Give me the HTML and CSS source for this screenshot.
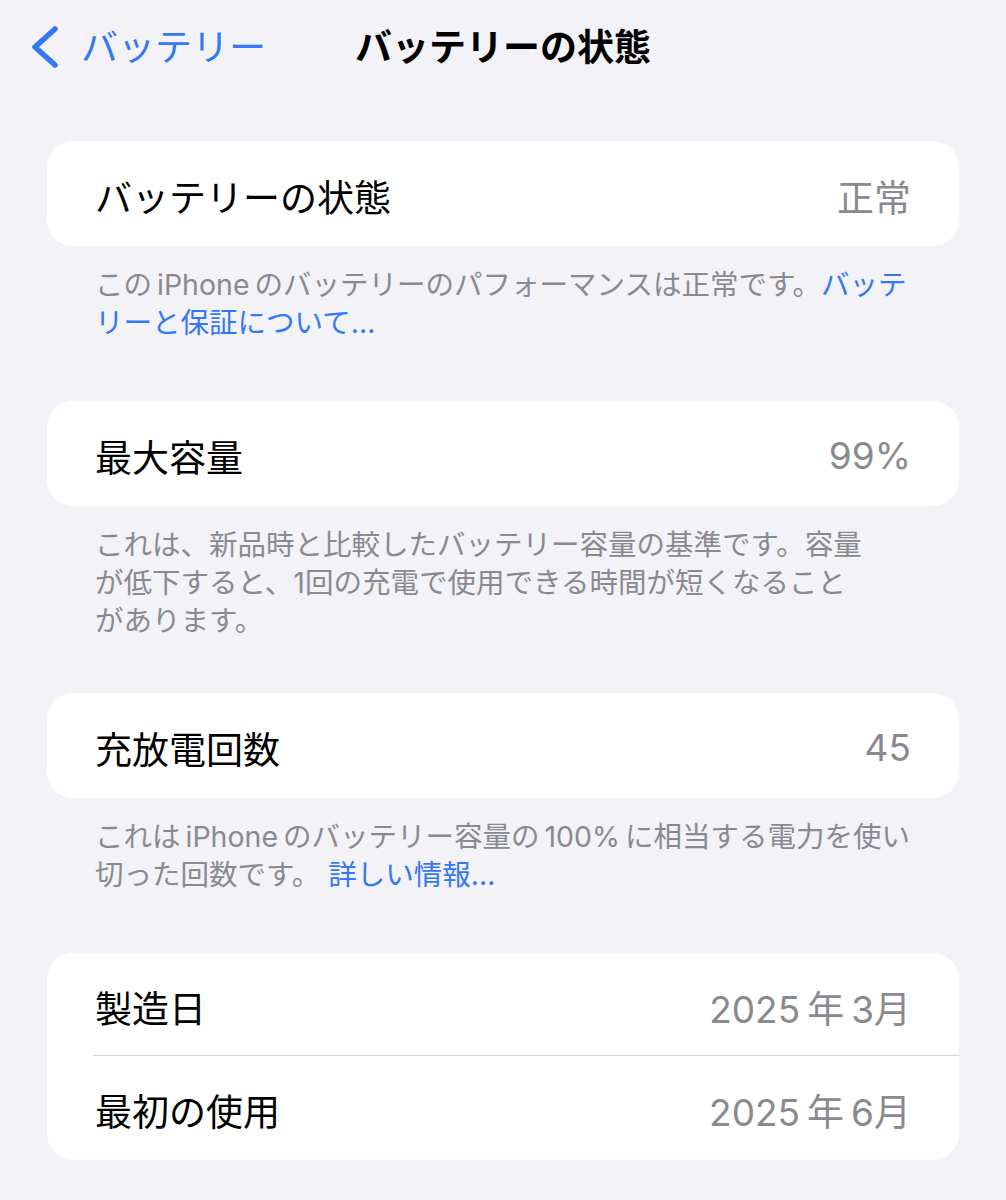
FILE: index.html
```html
<!DOCTYPE html>
<html lang="ja">
<head>
  <meta charset="utf-8" />
  <meta name="viewport" content="width=device-width, initial-scale=1.0">
  <title>バッテリーの状態</title>
  <link rel="stylesheet" href="styles.css">
</head>
<body>
  <!-- ナビゲーションバー -->
  <header class="nav">
    <a class="nav__back" href="#">
      <svg class="nav__chevron" viewBox="0 0 30 42" width="30" height="42" aria-hidden="true">
        <path d="M25 3 L5 21 L25 39" fill="none" stroke="currentColor" stroke-width="5.5" stroke-linecap="round" stroke-linejoin="round"/>
      </svg>
      <span>バッテリー</span>
    </a>
    <h1 class="nav__title">バッテリーの状態</h1>
  </header>

  <main class="list">
    <!-- バッテリーの状態 -->
    <section class="group">
      <div class="card">
        <div class="row">
          <span class="row__label">バッテリーの状態</span>
          <span class="row__value">正常</span>
        </div>
      </div>
      <p class="note">この<span class="en">iPhone</span>のバッテリーのパフォーマンスは正常です。<a href="#">バッテ<br>リーと保証について…</a></p>
    </section>

    <!-- 最大容量 -->
    <section class="group group--tight">
      <div class="card">
        <div class="row">
          <span class="row__label">最大容量</span>
          <span class="row__value">99%</span>
        </div>
      </div>
      <p class="note">これは、新品時と比較したバッテリー容量の基準です。容量<br>が低下すると、1回の充電で使用できる時間が短くなること<br>があります。</p>
    </section>

    <!-- 充放電回数 -->
    <section class="group">
      <div class="card">
        <div class="row">
          <span class="row__label">充放電回数</span>
          <span class="row__value">45</span>
        </div>
      </div>
      <p class="note">これは<span class="en">iPhone</span>のバッテリー容量の<span class="en">100%</span>に相当する電力を使い<br>切った回数です。 <a href="#">詳しい情報…</a></p>
    </section>

    <!-- 日付 -->
    <section class="group">
      <div class="card">
        <div class="row row--top">
          <span class="row__label">製造日</span>
          <span class="row__value">2025<span class="sp">年</span>3月</span>
        </div>
        <div class="divider"></div>
        <div class="row row--bottom">
          <span class="row__label">最初の使用</span>
          <span class="row__value">2025<span class="sp">年</span>6月</span>
        </div>
      </div>
    </section>
  </main>
</body>
</html>
```

FILE: styles.css
```css
/* ===== 基本 ===== */
*, *::before, *::after {
  margin: 0;
  padding: 0;
  box-sizing: border-box;
}

:root {
  --bg: #f2f2f7;
  --blue: #3478f6;
  --gray: #8a8a8e;
  --line: #d6d6da;
}

body {
  background: var(--bg);
  font-family: Inter, "Noto Sans CJK JP", sans-serif;
  color: #000;
  width: 1006px;
  min-height: 1200px;
}

a {
  color: var(--blue);
  text-decoration: none;
}

/* ===== ナビゲーション ===== */
.nav {
  display: grid;
  grid-template-columns: 1fr auto 1fr;
  align-items: center;
  height: 94px;
  padding: 0 30px;
}
.nav__back {
  display: flex;
  align-items: center;
  gap: 21px;
  font-size: 37px;
  line-height: 1;
}
.nav__chevron {
  display: block;
}
.nav__title {
  grid-column: 2;
  font-size: 37px;
  font-weight: 700;
  line-height: 1;
}

/* ===== リスト ===== */
.list {
  padding: 47px 47px 0;
}
.group {
  margin-bottom: 59px;
}
.group--tight {
  margin-bottom: 53px;
}
.card {
  background: #fff;
  border-radius: 26px;
  overflow: hidden;
}
.row {
  display: flex;
  justify-content: space-between;
  align-items: center;
  height: 105px;
  padding: 4px 48px 0;
  font-size: 37px;
}
.row--top {
  height: 102px;
  padding-top: 6px;
}
.row--bottom {
  height: 104px;
}
.row__value {
  color: var(--gray);
}
.sp {
  margin: 0 7px;
}
.divider {
  height: 1px;
  background: var(--line);
  margin-left: 46px;
}

/* ===== 説明文 ===== */
.note {
  padding: 20px 48px 0;
  font-size: 28.5px;
  line-height: 38px;
  color: var(--gray);
}
.en {
  margin: 0 5px;
}
```
